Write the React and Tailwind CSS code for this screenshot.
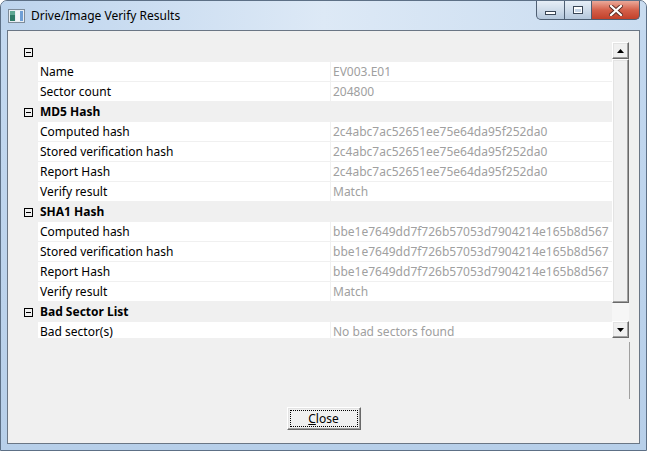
import React from 'react'

const MD5 = '2c4abc7ac52651ee75e64da95f252da0'
const SHA1 = 'bbe1e7649dd7f726b57053d7904214e165b8d567'

const rows = [
  { cat: '' },
  { label: 'Name', value: 'EV003.E01' },
  { label: 'Sector count', value: '204800' },
  { cat: 'MD5 Hash' },
  { label: 'Computed hash', value: MD5 },
  { label: 'Stored verification hash', value: MD5 },
  { label: 'Report Hash', value: MD5 },
  { label: 'Verify result', value: 'Match' },
  { cat: 'SHA1 Hash' },
  { label: 'Computed hash', value: SHA1 },
  { label: 'Stored verification hash', value: SHA1 },
  { label: 'Report Hash', value: SHA1 },
  { label: 'Verify result', value: 'Match' },
  { cat: 'Bad Sector List' },
  { label: 'Bad sector(s)', value: 'No bad sectors found' },
]

function Row({ r }) {
  if (r.cat !== undefined) {
    return (
      <div className="flex h-[20px] shrink-0 items-center">
        <div className="ml-px flex h-[9px] w-[9px] items-center justify-center border border-black">
          <div className="h-px w-[5px] bg-black" />
        </div>
        <span className="ml-[7px] font-bold text-black">{r.cat}</span>
      </div>
    )
  }
  return (
    <div className="flex h-[20px] shrink-0 items-start">
      <div className="w-[15px] shrink-0" />
      <div className="flex h-[19px] w-[292px] shrink-0 items-center bg-white pl-[2px] text-black">{r.label}</div>
      <div className="ml-px flex h-[19px] w-[281px] shrink-0 items-center overflow-hidden whitespace-nowrap bg-white pl-[2px] text-[#a0a0a0]">
        {r.value}
      </div>
    </div>
  )
}

const RAISED =
  'border-t border-l border-t-white border-l-white border-b border-r border-b-[#696969] border-r-[#696969] shadow-[inset_-1px_-1px_#a0a0a0,inset_1px_1px_#e3e3e3] bg-[#f0f0f0]'

function ScrollBar() {
  return (
    <div className="flex h-[296px] w-[17px] shrink-0 flex-col">
      <div className={`flex h-[17px] shrink-0 items-center justify-center ${RAISED}`}>
        <svg width="7" height="4" viewBox="0 0 7 4"><path d="M3.5 0L7 4H0z" fill="#000" /></svg>
      </div>
      <div className={`h-[244px] shrink-0 ${RAISED}`} />
      <div className="h-[18px] shrink-0 bg-[#f6f6f6]" />
      <div className={`flex h-[17px] shrink-0 items-center justify-center ${RAISED}`}>
        <svg width="7" height="4" viewBox="0 0 7 4"><path d="M0 0H7L3.5 4z" fill="#000" /></svg>
      </div>
    </div>
  )
}

function AppIcon() {
  return (
    <svg width="17" height="14" viewBox="0 0 17 14">
      <rect x="0.5" y="0.5" width="16" height="13" fill="#e9eef3" stroke="#7d8b99" />
      <rect x="2" y="2" width="5" height="10" fill="#2f7b68" />
      <rect x="2" y="2" width="5" height="4" fill="#5fa894" />
      <rect x="8" y="2" width="4" height="10" fill="#f4f6f8" />
      <rect x="12" y="2" width="3" height="10" fill="#6e9fd6" />
    </svg>
  )
}

function CaptionButtons() {
  return (
    <div className="mr-[6px] flex h-[19px] self-start overflow-hidden rounded-b-[5px] border border-t-0 border-[#4f5f73] bg-[#4f5f73]">
      <div className="flex w-[27px] items-end justify-center bg-gradient-to-b from-[#e6eef7] via-[#cfdcea] to-[#b4c7dc] pb-[4px]">
        <div className="h-[4px] w-[11px] border border-[#3a4656] bg-white" />
      </div>
      <div className="ml-px flex w-[26px] items-center justify-center bg-gradient-to-b from-[#e6eef7] via-[#cfdcea] to-[#b4c7dc]">
        <div className="h-[8px] w-[10px] border border-[#3a4656] bg-[#c6d5e6] shadow-[inset_0_2px_#fff,inset_1px_0_#fff,inset_-1px_0_#fff,inset_0_-1px_#fff]" />
      </div>
      <div className="ml-px flex w-[47px] items-center justify-center bg-gradient-to-b from-[#eaa99a] via-[#d4604a] to-[#c2402a]">
        <svg width="14" height="11" viewBox="0 0 14 11">
          <path d="M2 1L12 10M12 1L2 10" stroke="#5a2a22" strokeWidth="4" strokeLinecap="square" />
          <path d="M2 1L12 10M12 1L2 10" stroke="#fff" strokeWidth="2.2" strokeLinecap="square" />
        </svg>
      </div>
    </div>
  )
}

export default function App() {
  return (
    <div className="flex h-[451px] w-[647px] flex-col overflow-hidden rounded-t-[7px] border border-[#5d7086] bg-gradient-to-b from-[#c4d9f0] to-[#b7cfe9] font-['Noto_Sans',sans-serif] text-[12px] leading-none">
      <div className="flex h-[29px] shrink-0 items-center bg-gradient-to-r from-[#bdd4ed] via-[#dde9f6] to-[#c9dcf0]">
        <div className="ml-[7px] flex items-center">
          <AppIcon />
          <span className="ml-[6px] text-black">Drive/Image Verify Results</span>
        </div>
        <div className="flex-1" />
        <CaptionButtons />
      </div>
      <div className="mx-[6px] flex h-[414px] shrink-0 flex-col border border-[#6a7685] bg-[#f0f0f0]">
        <div className="ml-[15px] mt-[11px] flex h-[296px] w-[606px] shrink-0">
          <div className="flex w-[589px] flex-col overflow-hidden">
            {rows.map((r, i) => (
              <Row key={i} r={r} />
            ))}
          </div>
          <ScrollBar />
        </div>
        <div className="ml-[621px] mt-[4px] h-[57px] w-px shrink-0 bg-[#a0a0a0]" />
        <div className="mt-[8px] flex justify-center">
          <button
            className={`flex h-[23px] w-[74px] items-center justify-center p-[2px] text-black ${RAISED}`}
          >
            <span className="flex h-full w-full items-center justify-center border border-dotted border-black">
              <span className="underline">C</span>lose
            </span>
          </button>
        </div>
      </div>
    </div>
  )
}
